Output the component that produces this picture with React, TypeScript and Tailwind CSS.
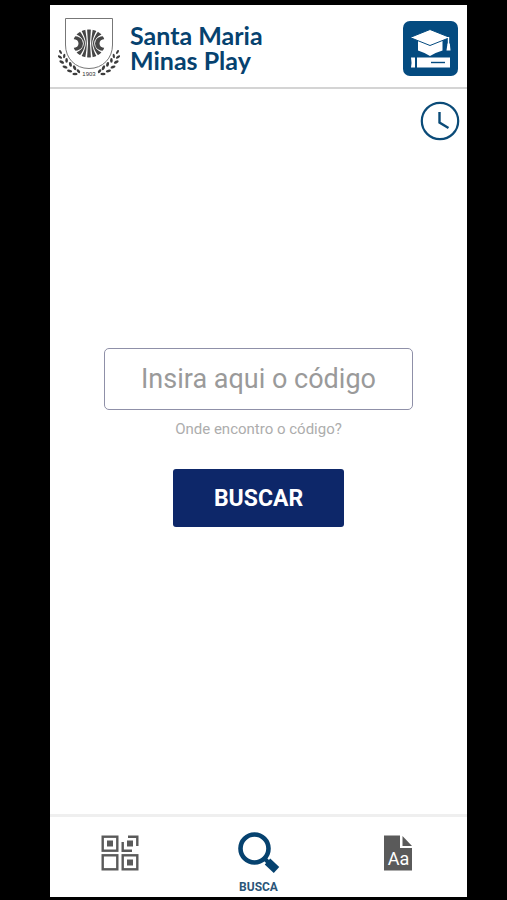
import React from 'react';

const NAVY = '#06426f';

const Leaves: React.FC = () => (
    <g fill="#3c3c3c">
        <ellipse cx="2.5" cy="34" rx="2.2" ry="1.1" transform="rotate(60 2.5 34)" />
        <ellipse cx="1.9" cy="39" rx="2.4" ry="1.2" transform="rotate(35 1.9 39)" />
        <ellipse cx="6.2" cy="38" rx="2.2" ry="1.1" transform="rotate(100 6.2 38)" />
        <ellipse cx="3.7" cy="44" rx="2.6" ry="1.3" transform="rotate(30 3.7 44)" />
        <ellipse cx="8.6" cy="42.4" rx="2.4" ry="1.3" transform="rotate(90 8.6 42.4)" />
        <ellipse cx="7" cy="49" rx="2.6" ry="1.3" transform="rotate(20 7 49)" />
        <ellipse cx="12.4" cy="46.4" rx="2.5" ry="1.4" transform="rotate(75 12.4 46.4)" />
        <ellipse cx="11.6" cy="53" rx="2.6" ry="1.3" transform="rotate(10 11.6 53)" />
        <ellipse cx="16.6" cy="49.8" rx="2.6" ry="1.4" transform="rotate(62 16.6 49.8)" />
        <ellipse cx="17" cy="56" rx="2.6" ry="1.3" />
        <ellipse cx="20.4" cy="53.2" rx="2.2" ry="1.3" transform="rotate(50 20.4 53.2)" />
    </g>
);

// one half of the striped disc, mirrored for the other side
const DiscHalf: React.FC = () => (
    <g fill="#464646">
        <path d="M14 18Q25 18 25 25.5T14 33V30Q20.5 30 20.5 25.5T14 21Z" />
        <path d="M16.500 15.500L20.5 11.5Q27 20 27 25.5T20.5 39.5L16.5 35.5Q25.800 31.500 25.800 25.500T16.500 15.500Z" />
        <path d="M22 10H27Q28.8 20 28.8 25.5T27 41H22Q27.8 31 27.8 25.5T22 10Z" />
    </g>
);

const Crest: React.FC = () => (
    <svg width="62" height="60" viewBox="0 0 62 60" className="shrink-0" aria-label="Santa Maria 1903" role="img">
        <path d="M7.5 0.500H54.5V27C54.5 40 45 50.500 31 50.500S7.500 40 7.500 27Z" fill="#fff" stroke="#777" strokeWidth="1" />
        <clipPath id="disc">
            <ellipse cx="31" cy="25.5" rx="16" ry="14" />
        </clipPath>
        <g clipPath="url(#disc)">
            <DiscHalf />
            <g transform="matrix(-1 0 0 1 62 0)">
                <DiscHalf />
            </g>
            <path d="M29 10H33L32 25.5L33 41H29L30 25.5Z" fill="#464646" />
        </g>
        <Leaves />
        <g transform="matrix(-1 0 0 1 62 0)">
            <Leaves />
        </g>
        <text x="31" y="58" textAnchor="middle" fontSize="6" fontFamily="Liberation Sans, sans-serif" fill="#333">1903</text>
    </svg>
);

const LibraryIcon: React.FC = () => (
    <svg width="55" height="55" viewBox="0 0 55 55" aria-hidden="true">
        <rect width="55" height="55" rx="7" fill="#044b80" />
        <path d="M15 18V29.5Q20 31 27 35Q34 31 39.5 29.5V18L27 24Z" fill="#fff" />
        <path d="M7 16.5L27 8.5L47 16.5L27 24.5Z" fill="#fff" stroke="#044b80" strokeWidth="1" />
        <path d="M45.5 16V24" stroke="#fff" strokeWidth="1.4" />
        <path d="M44.5 22.5H46.8L47.5 29.5H43.5Z" fill="#fff" />
        <path d="M8 36.5H12V46.5H8Q9 41.5 8 36.5ZM14 36.5H47V46.5H14Z" fill="#fff" />
        <path d="M28 41.5H42" stroke="#044b80" strokeWidth="1.4" />
    </svg>
);

const ClockIcon: React.FC = () => (
    <svg width="40" height="40" viewBox="0 0 40 40" fill="none" stroke="#0b4b78" aria-hidden="true">
        <circle cx="20" cy="20" r="18.2" strokeWidth="2.2" />
        <path d="M19.5 11V21.5L28.5 27" strokeWidth="2.4" />
    </svg>
);

const QrIcon: React.FC = () => (
    <svg width="38" height="36" viewBox="0 0 38 36" fill="none" stroke="#5a5a5a" strokeWidth="2.4" aria-hidden="true">
        <rect x="1.7" y="1.7" width="14.6" height="14" />
        <rect x="1.7" y="20.3" width="14.6" height="14" />
        <rect x="21.7" y="20.3" width="14.6" height="14" />
        <path d="M27 1.7H36.3V11M21.7 7V15.7H31" />
        <path d="M6 5.5H12V11.5H6ZM26 5.5H32V11.5H26ZM26 24.5H32V30.5H26Z" fill="#5a5a5a" stroke="none" />
    </svg>
);

const SearchIcon: React.FC = () => (
    <svg width="42" height="42" viewBox="0 0 42 42" fill="none" stroke={NAVY} aria-hidden="true">
        <circle cx="16.5" cy="16.5" r="14" strokeWidth="4.6" />
        <path d="M26 26L31 31" strokeWidth="4" />
        <path d="M29.5 29.5L38.5 38" strokeWidth="8" />
    </svg>
);

const DocIcon: React.FC = () => (
    <svg width="30" height="36" viewBox="0 0 30 36" aria-hidden="true">
        <path d="M1 0.5H17V13H29V35.5H1Z" fill="#5a5a5a" />
        <path d="M19.5 1L29 11H19.5Z" fill="#5a5a5a" />
        <text x="15.5" y="29.5" textAnchor="middle" fontSize="18" fontFamily="Roboto, sans-serif" fill="#fff">Aa</text>
    </svg>
);

const App: React.FC = () => {
    return (
        <div className="min-h-screen bg-black pt-[5px] pr-10 pb-[3px] pl-[50px] flex flex-col font-[Roboto,sans-serif]">
            <div className="flex-1 flex flex-col bg-white">
                <header className="h-[84px] shrink-0 flex items-center border-b-2 border-[#d4d4d4] pt-1 pl-2 pr-[9px]">
                    <Crest />
                    <h1 className="ml-[10px] text-[25px] leading-[25px] font-bold font-[Lato,sans-serif] text-[#06426f]">
                        Santa Maria
                        <br />
                        Minas Play
                    </h1>
                    <button type="button" aria-label="Biblioteca" className="ml-auto">
                        <LibraryIcon />
                    </button>
                </header>

                <main className="flex-1 flex flex-col">
                    <div className="flex justify-end pt-3 pr-[7px]">
                        <button type="button" aria-label="Histórico">
                            <ClockIcon />
                        </button>
                    </div>

                    <form
                        className="flex-1 flex flex-col items-center justify-center px-[54px] pb-20"
                        onSubmit={(e) => e.preventDefault()}
                    >
                        <input
                            type="text"
                            aria-label="Código"
                            placeholder="Insira aqui o código"
                            className="w-full h-[62px] rounded-[5px] border border-[#8f90a8] bg-white text-center text-[27px] text-gray-700 placeholder:text-[#9a9a9a]"
                        />
                        <a href="#codigo" className="mt-2 text-[15px] leading-[22px] text-[#adadad]">
                            Onde encontro o código?
                        </a>
                        <button
                            type="submit"
                            className="mt-[29px] h-[58px] w-[171px] rounded-[3px] bg-[#0d2769] pt-[3px] text-[23px] font-bold text-white"
                        >
                            BUSCAR
                        </button>
                    </form>
                </main>

                <nav className="h-[83px] shrink-0 grid grid-cols-3 border-t-3 border-[#efefef]">
                    <button type="button" aria-label="QR Code" className="flex flex-col items-center pt-[18px]">
                        <QrIcon />
                    </button>
                    <button type="button" className="flex flex-col items-center pt-[15px]">
                        <SearchIcon />
                        <span className="mt-[6px] text-[12px] leading-[14px] font-bold text-[#2b5578]">BUSCA</span>
                    </button>
                    <button type="button" aria-label="Textos" className="flex flex-col items-center pt-[18px]">
                        <DocIcon />
                    </button>
                </nav>
            </div>
        </div>
    );
};

export default App;
